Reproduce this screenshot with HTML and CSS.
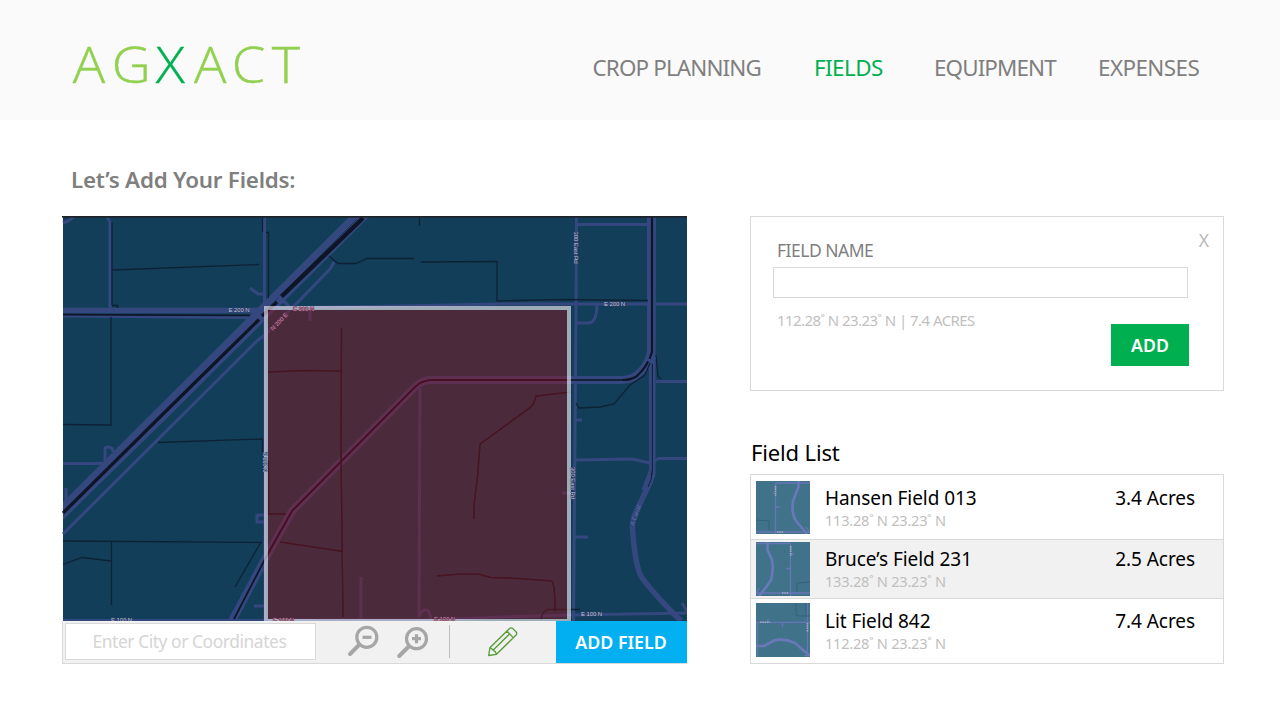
FILE: index.html
```html
<!DOCTYPE html>
<html lang="en">
<head>
<meta charset="utf-8">
<title>AGXACT – Fields</title>
<link rel="stylesheet" href="styles.css">
</head>
<body>
<header class="header">
  <div class="logo" role="img" aria-label="AGXACT">
    <span class="logo-a">A</span><span class="logo-g">G</span><span class="logo-x">X</span><span class="logo-a2">A</span><span class="logo-c">C</span><span class="logo-t">T</span>
  </div>
  <nav class="nav">
    <a class="nav-item nav-crop">CROP PLANNING</a>
    <a class="nav-item nav-fields">FIELDS</a>
    <a class="nav-item nav-equipment">EQUIPMENT</a>
    <a class="nav-item nav-expenses">EXPENSES</a>
  </nav>
</header>
<main class="main">
  <section class="left">
    <h1 class="title">Let’s Add Your Fields:</h1>
    <div class="map-card">
      <svg class="map" width="625" height="405" viewBox="62 216 625 405">
        <rect class="map-bg" x="63" y="216" width="624" height="405"/>
        <g class="road">
          <path d="M63 223L68 221L74 217M107 217L110 222V308M264.500 217V305M250 288L258 294H264M334 262L330 269L298 302L265 335L258 340L63 534M279 296L292 309M310 308V321"/>
          <path d="M105 461V449Q105 447 108 447Q113 447 113 452M63 463.500H103M66 488V503M265 515H257V522H265M254 606H265M265 310V621M63 620.500H265"/>
          <path d="M420 388L419 617M361 577V620M419 616Q422 609 427 610Q430 612 431 619M265 620H431L500 617L570 615L687 613M562 493H571"/>
          <path d="M576.500 217L576 310L573.500 621M268 308L400 306L500 304H687M577 224.500H650M577 323H588Q597 323 597 304M656 381.500H687M575 420H582M575 460L632 459L650 463L659 458.500H687M575 537H588M682 603L688 613"/>
          <path d="M654.500 217L654 400V475L648 490M650.500 362V470L643 490"/>
          <path class="road-5" d="M651 475Q651 482 644 495L636 512Q631 522 633 535Q636 571 643 579Q652 592 681 621"/>
          <path class="road-8" d="M651 217V352Q648 366 637 375Q631 380 620 380H432Q422 380 415 387L292 511L264 561L232 621"/>
          <path class="road-5" d="M63 310.500H262"/><path class="road-3" d="M63 316L248 317.500L262 314"/>
        </g>
        <polygon class="road-fill" points="349,217 369,217 165,420 63,520 63,502 145,420"/>
        <path class="diag-gap" d="M357 219L270 306"/>
        <g class="track">
          <path d="M112 222V305M112 270L259 264.500M112 305.500H117.500V308M262.500 217V232M266 232.500H268.500V298M329 256L338 263.500H356L367 258.500H414M421 262L497 261.500V301L560 299.500L648 300.500M419.500 217V226"/>
          <path d="M111 317V425L63 424.500M158 442.500L262.500 439V455M63 541L262 542.500M111.500 542V605M63 564.500L82 557.500L111 561M260.500 543L235 587"/>
          <path d="M268 372L305 370.500L341 371M341.500 328L341 455L343 617M268.500 460V514H286M280 542L343 551.500"/>
          <path d="M571 392L536 396Q534 404 531 407L513 420L480 444L477.500 477L474 505V519M437 576L460 574H478L491 577.500L519 578.500L552 581Q555 586 555 611M541 620Q542 611 548 609.500H580"/>
          <path d="M656 355L658 376L661 379M576 403L579 408L600 407L614 404L630 385L645 375L650 363"/>
        </g>
        <g class="rail">
          <path class="rail-main rail-top" d="M363 218L281 297"/>
          <path class="rail-main" d="M277 302L262 316M259 319.500L162 415L63 513"/>
          <path d="M63 314.700L250 315.500"/>
          <path class="rail-wide" d="M652 217V352Q648 366 637 376Q631 380 623 380"/>
          <path d="M625 380H432Q422 380 415 387L292 511L264 561L234 619"/>
          <path class="rail-thin" d="M652.300 364V470Q652 480 648 487"/>
        </g>
        <path class="road-3" d="M647 359L652 362L655 357M279 296L288 306"/>
        <rect class="selection-fill" x="268" y="310" width="299" height="309"/>
        <path class="lane" d="M567 380H432Q422 380 415 387L292 511L268 553"/>
        <path class="selected-track" d="M268 372L305 370.500L341 371M341.500 328L341 455L343 617M268.500 460V514H286M280 542L343 551.500M567 392.500L536 396Q534 404 531 407L513 420L480 444L477.500 477L474 505V519M437 576L460 574H478L491 577.500L519 578.500L552 581Q555 586 555 611"/>
        <rect class="selection-edge" x="266" y="308" width="303" height="313"/>
        <g class="map-label">
          <text x="228.500" y="312" textLength="21">E 200 N</text>
          <text x="604" y="305.500" textLength="21">E 200 N</text>
          <text x="111" y="622" textLength="21">E 100 N</text>
          <text x="581" y="615.700" textLength="21">E 100 N</text>
          <text transform="translate(574 231.500) rotate(90)" textLength="32">300 East Rd</text>
          <text transform="translate(571 467) rotate(90)" textLength="32">300 East Rd</text>
          <text transform="translate(267 472) rotate(-90)" textLength="20">N 200 E</text>
        </g>
        <g class="map-label map-label-pink">
          <text x="293" y="311" textLength="21">E 200 N</text>
          <text x="273" y="622" textLength="21">E 100 N</text>
          <text x="434" y="621" textLength="21">E 100 N</text>
          <text transform="translate(273 331) rotate(-46)" textLength="22">N 200 E</text>
        </g>
        <text class="canal-label" transform="translate(634 526) rotate(-70)">A Canal</text>
        <rect class="map-top" x="62" y="216" width="625" height="1.700"/>
      </svg>
      <div class="toolbar">
        <div class="search">Enter City or Coordinates</div>
        <svg class="tools" width="200" height="42" viewBox="330 621 200 42">
          <g class="zoom-icon">
            <circle cx="366.800" cy="637.300" r="10"/><path d="M362.500 637.300H371.500"/><path class="handle" d="M358.500 645.500L350 654"/>
            <circle cx="416.500" cy="638.700" r="10"/><path d="M412 638.700H421M416.500 634.200V643.200"/><path class="handle" d="M408.200 647L399.200 656"/>
          </g>
          <path class="separator" d="M449.500 625V658"/>
          <path class="pencil" d="M488.700 655.500L489.900 647.800L509 629Q511 627 512.800 628.600L516 631.800Q517.500 633.500 515.800 635.300L496.500 654.300ZM490 647.800Q491.500 648 493 650.200Q496 651.500 496.500 654.300M493 650.200L510 633.500M507 631.200L513.200 637.600"/>
        </svg>
        <button class="add-field">ADD FIELD</button>
      </div>
    </div>
  </section>
  <section class="right">
    <form class="panel form">
      <div class="form-head"><label class="form-label">FIELD NAME</label><span class="close">X</span></div>
      <div class="field-input"></div>
      <div class="form-foot">
        <span class="form-coords">112.28˚ N 23.23˚ N | 7.4 ACRES</span>
        <button class="add" type="button">ADD</button>
      </div>
    </form>
    <h2 class="list-title">Field List</h2>
    <ul class="panel list">
      <li class="row">
        <svg class="thumb" width="54" height="53" viewBox="0 0 54 53">
          <path class="t-road" d="M19.500 2V53M19.500 2H54M0 51H54M19.500 26H24M17 12H20M50 46L54 52"/>
          <path class="t-river" d="M42.500 0V6L37 20Q35 34 41 41L51 53"/>
          <path class="t-track" d="M0 39L13 40V49"/><path class="t-name" d="M19.500 5V15M21 51H28"/>
        </svg>
        <div class="info"><div class="name">Hansen Field 013</div><div class="coords">113.28˚ N 23.23˚ N</div></div>
        <div class="acres">3.4 Acres</div>
      </li>
      <li class="row row-alt">
        <svg class="thumb" width="54" height="54" viewBox="0 0 54 54">
          <path class="t-road" d="M0 1.500H34.500V54M0 51H54M30 26.500H34M34 12H38M3 46L0 52"/>
          <path class="t-river" d="M11.500 0V8L16 18Q18 26 15 38Q10 46 3 54"/>
          <path class="t-track" d="M54 40L41 41V50"/><path class="t-name" d="M34.700 4V14M26 51H33"/>
        </svg>
        <div class="info"><div class="name">Bruce’s Field 231</div><div class="coords">133.28˚ N 23.23˚ N</div></div>
        <div class="acres">2.5 Acres</div>
      </li>
      <li class="row">
        <svg class="thumb" width="54" height="54" viewBox="0 0 54 54">
          <path class="t-road" d="M0 19.300H54M1.500 19V54M51.500 0V54M26.500 20V24M12 16V19M48 53L54 51"/>
          <path class="t-river" d="M0 43H8L18 37.500Q28 35 39 40L54 53"/>
          <path class="t-track" d="M40 0V11Q40 13 43 13H54M50 0V12"/><path class="t-name" d="M4 19.300H14M51.500 20V29"/>
        </svg>
        <div class="info"><div class="name">Lit Field 842</div><div class="coords">112.28˚ N 23.23˚ N</div></div>
        <div class="acres">7.4 Acres</div>
      </li>
    </ul>
  </section>
</main>
</body>
</html>
```
FILE: styles.css
```css
* { box-sizing: border-box; }
body { margin: 0; width: 1280px; height: 720px; overflow: hidden; background: #fff; color: #000; font-family: "Noto Sans", "Open Sans", sans-serif; }
button { border: 0; padding: 0; font-family: inherit; font-weight: 600; color: #fff; }
.header { display: flex; justify-content: space-between; height: 120px; padding: 30px 80px 0 70px; background: #fafafa; }
.logo { display: flex; width: 240px; padding-left: 2.600px; font-family: "Open Sans", "Noto Sans", sans-serif; font-weight: 300; font-size: 50px; line-height: 68px; color: #92d050; -webkit-text-stroke: .4px currentColor; transform: scaleX(1.08); transform-origin: left; }
.logo span { flex: none; }
.logo-a { width: 36.100px; }
.logo-g { width: 40.700px; }
.logo .logo-x { width: 35.400px; color: #00b050; }
.logo-a2 { width: 35px; }
.logo-c { width: 37px; }
.nav { display: flex; padding-top: 23px; }
.nav-item { font-size: 22.400px; line-height: 30px; letter-spacing: -0.550px; color: #7f7f7f; white-space: nowrap; }
.nav-crop { width: 222px; letter-spacing: -0.850px; text-indent: .5px; }
.nav-fields { width: 120px; color: #00b050; }
.nav-equipment { width: 164px; letter-spacing: -0.880px; }
.nav-expenses { width: 102px; }

.main { display: flex; gap: 63px; padding: 0 0 0 62px; }
.left { width: 625px; }
.title { margin: 45px 0 0 9px; height: 51px; font-size: 22.400px; line-height: 30px; font-weight: 600; letter-spacing: -0.240px; color: #7f7f7f; white-space: nowrap; }
.map { display: block; }
.map-card { height: 448px; border-bottom: 1px solid #d9d9d9; }
.map-bg { fill: #123e59; }
.map-top { fill: #1e2328; }
.road path { fill: none; stroke: #34487f; stroke-width: 3; }
.road .road-5 { stroke-width: 5.500; }
.road .road-8 { stroke-width: 8; }
.road-3 { fill: none; stroke: #34487f; stroke-width: 3; }
.road-fill { fill: #34487f; }
.diag-gap { stroke: #183a5c; stroke-width: 1; }
.track path { fill: none; stroke: #0e2236; stroke-width: 1.300; }
.rail path { fill: none; stroke: #0d1526; stroke-width: 1.700; }
.rail .rail-main { stroke-width: 3.300; }
.rail .rail-top { stroke-width: 4.500; }
.rail .rail-wide { stroke-width: 2.200; }
.rail .rail-thin { stroke-width: .8; }
.lane { fill: none; stroke: #4a0d22; stroke-width: 1.500; }
.selected-track { fill: none; stroke: #48141f; stroke-width: 1.200; }
.selection-fill { fill: rgb(148, 16, 21); opacity: .43; }
.selection-edge { fill: none; stroke: #f0eaf0; stroke-width: 4; opacity: .63; }
.map-label { font-family: "Liberation Sans", sans-serif; font-size: 6px; fill: #c3c8d6; stroke: #2a3a68; stroke-width: .8px; paint-order: stroke; }
.map-label-pink { fill: #d08a98; stroke: #5e3055; }
.canal-label { font-size: 6px; fill: #5f719b; }

.toolbar { display: flex; height: 42px; padding-left: 2px; background: #f1f1f1; border-left: 1px solid #d9d9d9; }
.search { flex: none; width: 251px; height: 37px; margin: 2px 14px 0 0; border: 1px solid #d9d9d9; background: #fff; color: #d5d5d5; font-size: 17.400px; line-height: 34px; letter-spacing: -0.430px; padding-left: 26.500px; white-space: nowrap; }
.tools { flex: none; margin-right: 26px; }
.zoom-icon { fill: none; stroke: #a6a6a6; stroke-width: 3.200; }
.handle { stroke-width: 4; stroke-linecap: round; }
.separator { stroke: #bfbfbf; stroke-width: 1; }
.pencil { fill: none; stroke: #559b36; stroke-width: 1.300; stroke-linejoin: round; }
.add-field { flex: none; width: 131px; height: 42px; padding-right: 1px; padding-bottom: 1px; background: #02b0f1; font-size: 17.800px; }

.right { width: 474px; padding-top: 96px; }
.panel { margin: 0; border: 1px solid #d9d9d9; }
.form { height: 175px; padding: 12px 14px 0 22px; }
.form-head { display: flex; justify-content: space-between; height: 38px; padding-left: 4px; }
.form-label { margin-top: 8px; font-size: 17.500px; line-height: 26px; letter-spacing: -0.500px; color: #7f7f7f; }
.close { font-size: 17.500px; line-height: 23px; color: #b8b8b8; }
.field-input { width: 415px; height: 31px; border: 1px solid #d9d9d9; }
.form-foot { display: flex; justify-content: space-between; padding-left: 4px; }
.form-coords { margin-top: 11px; font-size: 15px; line-height: 22px; letter-spacing: -0.560px; color: #bfbfbf; white-space: nowrap; }
.add { margin: 26px 20px 0 0; width: 78px; height: 42px; background: #00b050; font-size: 17.700px; }
.list-title { margin: 46px 0 6px 1px; font-size: 22px; line-height: 31px; font-weight: 400; letter-spacing: -0.150px; }
.list { height: 190px; padding: 0; list-style: none; }
.row { display: flex; height: 65px; padding: 6px 28px 0 5px; border-bottom: 1px solid #d9d9d9; }
.row-alt { height: 59px; padding-top: 2px; background: #f1f1f1; }
.row:last-child { height: 64px; padding-top: 4px; border: 0; }
.thumb { flex: none; background: #40738a; }
.info { flex: 1; padding-left: 15px; }
.name, .acres { font-size: 19px; line-height: 24px; letter-spacing: -0.060px; margin-top: 5px; white-space: nowrap; }
.coords { margin-top: -1px; font-size: 14.600px; line-height: 22px; letter-spacing: -0.250px; color: #bfbfbf; }
.row:last-child .name, .row:last-child .acres { margin-top: 6px; }
.t-road { fill: none; stroke: #6676b5; stroke-width: 1.300; }
.t-river { fill: none; stroke: #6a78b9; stroke-width: 2.600; }
.t-track { fill: none; stroke: #34617a; stroke-width: 1; }
.t-name { fill: none; stroke: #a3acc8; stroke-width: 1.600; stroke-dasharray: 1.500 .8; }
```
